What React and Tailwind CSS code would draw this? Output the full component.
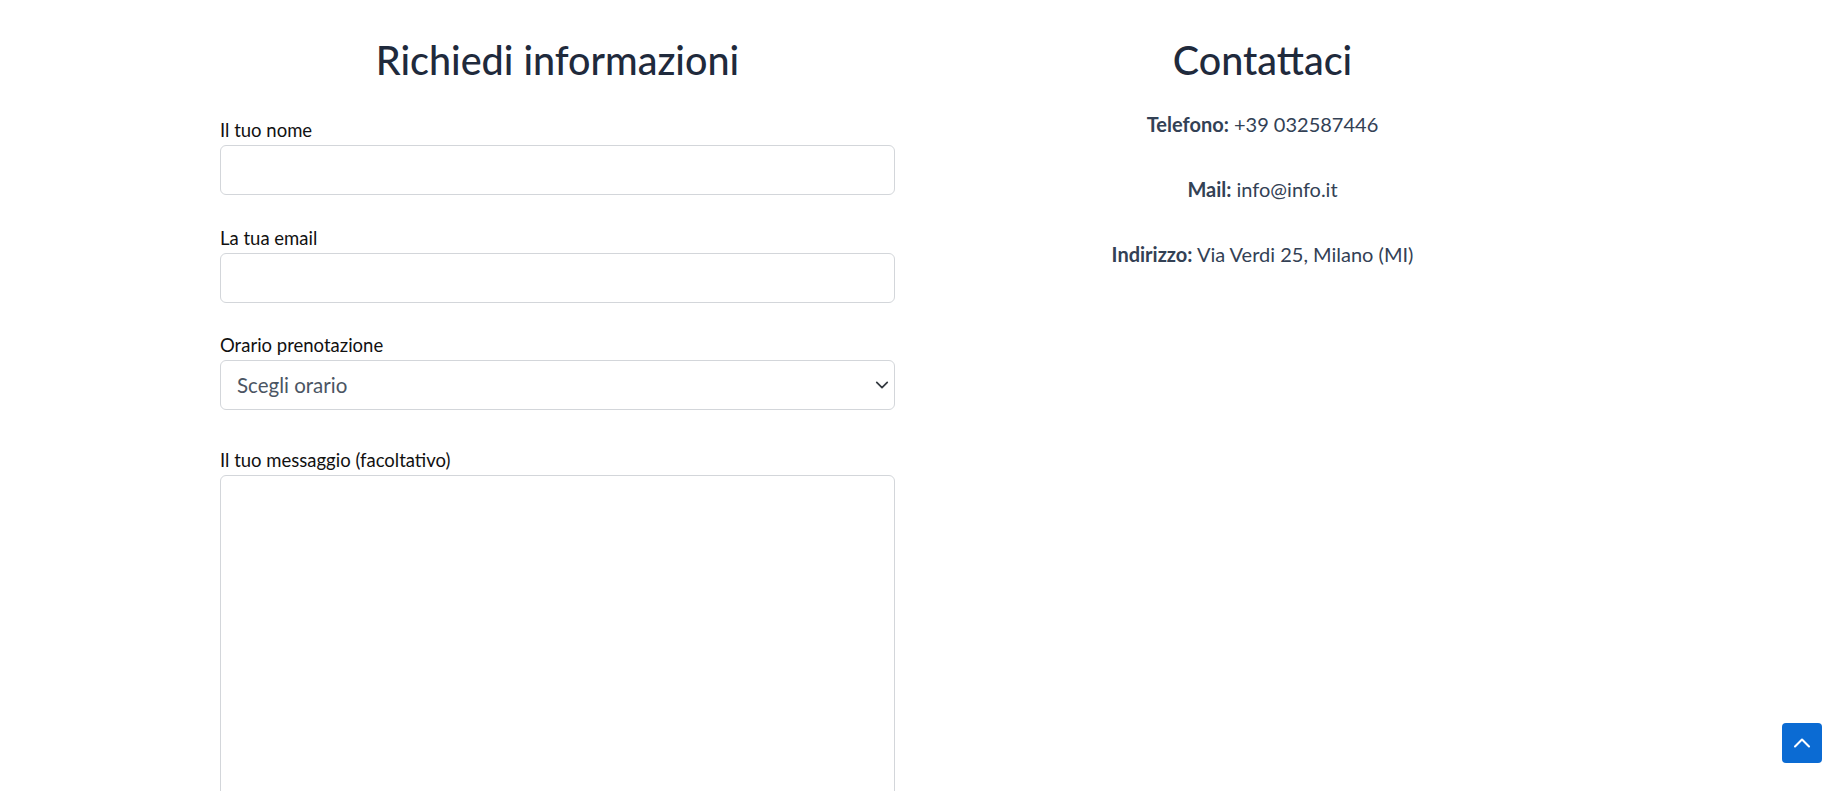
import { ChevronUp } from 'lucide-react'

const Field = ({ label, children, className = '' }) => (
  <div className={className}>
    <label className="block text-[18.5px] leading-[24px] text-[#111] mb-[3px]">{label}</label>
    {children}
  </div>
)

const inputCls =
  'block w-full h-[50px] rounded-[6px] border border-[#d3d6da] bg-white px-4 text-[20.5px] text-[#4b5563] outline-none'

const ContactRow = ({ title, value }) => (
  <p className="text-[20px] leading-[30px] text-[#334155] mb-[35px]">
    <span className="font-bold">{title}</span> {value}
  </p>
)

export default function App() {
  return (
    <div className="min-h-screen bg-white font-['Segoe_UI','Lato',sans-serif] overflow-hidden">
      <div className="ml-[205px] w-[1410px] grid grid-cols-2">
        {/* Form */}
        <div className="px-[15px]">
          <h2 className="mt-[36px] text-center text-[39.5px] leading-[48px] font-medium text-[#1f2a3c]">
            Richiedi informazioni
          </h2>
          <form className="mt-[34px]">
            <Field label="Il tuo nome">
              <input type="text" className={inputCls} />
            </Field>
            <Field label="La tua email" className="mt-[31px]">
              <input type="email" className={inputCls} />
            </Field>
            <Field label="Orario prenotazione" className="mt-[30px]">
              <div className="relative">
                <select className={inputCls + ' appearance-none'} defaultValue="">
                  <option value="">Scegli orario</option>
                  <option>10:00</option>
                  <option>12:00</option>
                </select>
                <svg
                  className="absolute right-[6px] top-1/2 -translate-y-1/2 pointer-events-none"
                  width="14"
                  height="14"
                  viewBox="0 0 16 16"
                >
                  <path d="M2 5l6 6 6-6" fill="none" stroke="#343a40" strokeWidth="2" strokeLinecap="round" strokeLinejoin="round" />
                </svg>
              </div>
            </Field>
            <Field label="Il tuo messaggio (facoltativo)" className="mt-[38px]">
              <textarea className="block w-full h-[360px] rounded-[6px] border border-[#d3d6da] bg-white px-4 py-2 text-[18px] outline-none resize-none" />
            </Field>
          </form>
        </div>

        {/* Contatti */}
        <div className="px-[15px] text-center">
          <h2 className="mt-[36px] text-[39.5px] leading-[48px] font-medium text-[#1f2a3c]">Contattaci</h2>
          <div className="mt-[25px]">
            <ContactRow title="Telefono:" value="+39 032587446" />
            <ContactRow title="Mail:" value="info@info.it" />
            <ContactRow title="Indirizzo:" value="Via Verdi 25, Milano (MI)" />
          </div>
        </div>
      </div>

      <button className="fixed right-[16px] bottom-[28px] w-[40px] h-[40px] rounded-[4px] bg-[#0b6bd3] flex items-center justify-center">
        <ChevronUp size={28} color="#fff" strokeWidth={1.8} />
      </button>
    </div>
  )
}
